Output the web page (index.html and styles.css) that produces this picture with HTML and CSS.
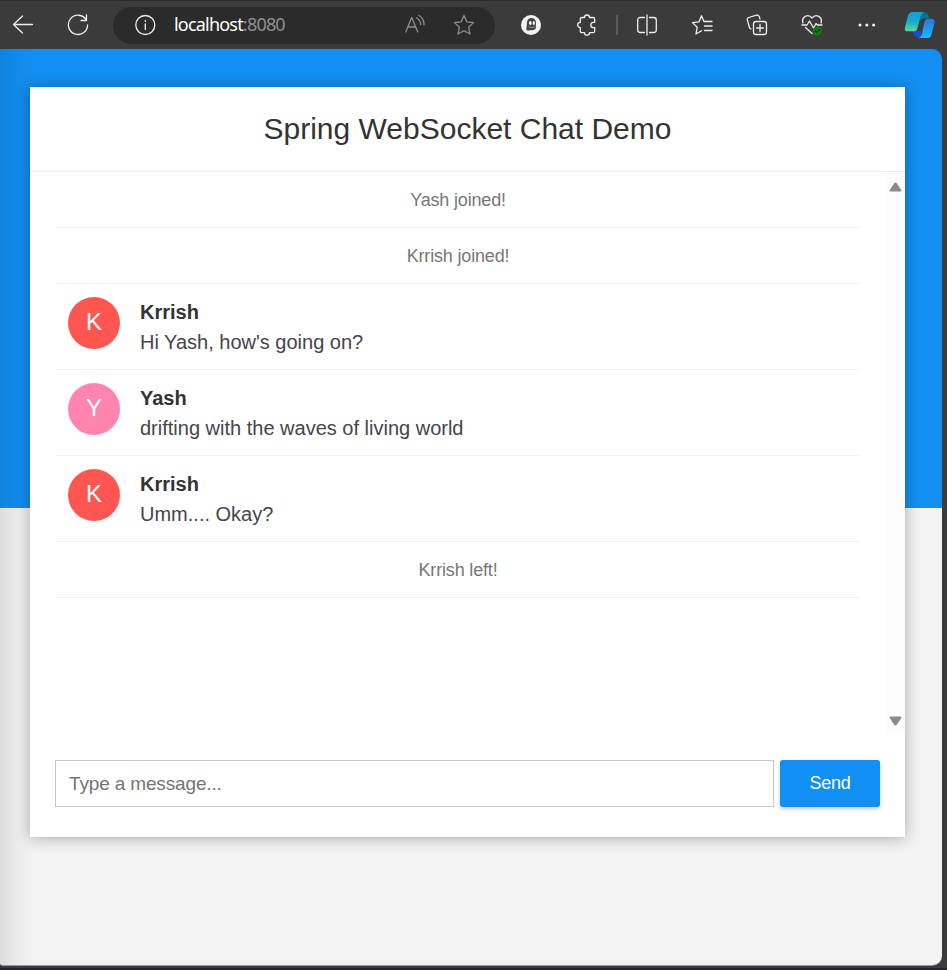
FILE: index.html
```html
<!DOCTYPE html>
<html lang="en">
<head>
<meta charset="utf-8">
<title>Spring WebSocket Chat Demo</title>
<link rel="stylesheet" href="styles.css">
</head>
<body>
<header class="toolbar">
  <div class="nav">
    <svg class="icon" viewBox="0 0 22 22"><path d="M20.500 10.500H1.500M10.500 2L1.500 10.500L10.500 19"/></svg>
    <svg class="icon" viewBox="0 0 22 22"><path d="M19.300 6A9.600 9.600 0 1 0 20.600 11M19.500 1v5.500h-5.500"/></svg>
  </div>
  <div class="address">
    <svg class="icon" viewBox="0 0 22 22"><circle cx="11.300" cy="11" r="9.500"/><path d="M11.300 10v5.500M11.300 6.500v.8"/></svg>
    <span class="url">localhost<span class="port">:8080</span></span>
    <svg class="icon dim read" viewBox="0 0 22 22"><path d="M2.800 18L8.700 3.500L14.800 18M4.900 13h7.600M13.500 3.800q4 2.500 4.300 6.700M16 1.500q5 3 5 9"/></svg>
    <svg class="icon dim" viewBox="0 0 22 22"><path d="M11 1.500L13.800 7.800L20.500 8.600L15.600 13.200L17 20L11 16.600L5 20L6.400 13.200L1.500 8.600L8.200 7.800Z"/></svg>
  </div>
  <div class="tools">
    <svg class="icon" viewBox="0 0 22 22"><circle cx="11" cy="11" r="10" fill="#f2f2f2" stroke="none"/><path d="M6.300 16L7 8.500a4.500 4.500 0 0 1 9 0L15.700 15q-2 1.500-4.700 1-2.500 1-4.700 0z" fill="#444" stroke="none"/><ellipse cx="10.300" cy="9" rx="1.300" ry="2" fill="#fff" stroke="none"/><ellipse cx="13.800" cy="9" rx="1.100" ry="2" fill="#fff" stroke="none"/><path d="M9 13q3 1.300 5 0" stroke="#888"/></svg>
    <svg class="icon puzzle" viewBox="0 0 22 22"><path d="M6 3.500H8.500a2.500 2.500 0 0 1 5 0H17q1.700 0 1.700 1.700V8.300H17.500a2.700 2.700 0 0 0 0 5.400H18.700V17q0 1.700-1.700 1.700H13.500a2.500 2.500 0 0 1-5 0H6Q4.300 18.700 4.300 17v-3.400a2.600 2.600 0 0 1 0-5.200V5.200Q4.300 3.500 6 3.500Z"/></svg>
    <i class="divider"></i>
    <svg class="icon" viewBox="0 0 22 22"><path d="M11 1v20M8.500 3.500H4.500Q1.700 3.500 1.700 6v10q0 2.500 2.800 2.500h4M13.500 3.500H17.500q2.800 0 2.800 2.500v10q0 2.500-2.800 2.500h-4"/></svg>
    <svg class="icon" viewBox="0 0 22 22"><path d="M13 7.500L10.500 1.800L8 7.800L1.500 8.600L6.200 13.200L5 20L10.500 16.800M13 7.500h8M13.500 12H21M13.500 16.500H21"/></svg>
    <svg class="icon" viewBox="0 0 22 22"><rect x="7.500" y="7.500" width="13" height="13" rx="2.500"/><path d="M14 10.500v7M10.500 14h7M5 15Q3.700 14.500 3.300 13L1.300 5.800Q1 4 2.700 3.500L10.500 1.200Q12.500 .8 13.200 2.500L14 5"/></svg>
    <svg class="icon" viewBox="0 0 22 22"><path d="M2 9C0 3 7-1 11 4C15-1 22 3 20 9M1 11h5l2.500-4 4 7 2.500-4.500L16.500 11H21M4.500 13.500L11 19.500"/><circle cx="16.500" cy="17" r="4.600" fill="#107c10" stroke="none"/><path d="M14.300 17l1.500 1.500 3-3" stroke="#064a06"/></svg>
    <svg class="icon" viewBox="0 0 22 22"><g fill="#f2f2f2" stroke="none"><circle cx="4" cy="11" r="1.500"/><circle cx="10.800" cy="11" r="1.500"/><circle cx="17.600" cy="11" r="1.500"/></g></svg>
  </div>
  <svg class="copilot" viewBox="0 0 32 28">
    <defs>
      <linearGradient id="left" x1="0" y1="0" x2="0" y2="1"><stop offset="0" stop-color="#159cd8"/><stop offset=".5" stop-color="#14aecb"/><stop offset="1" stop-color="#5ddb8c"/></linearGradient>
      <linearGradient id="right" x1="0" y1="0" x2="0" y2="1"><stop offset="0" stop-color="#2a72dc"/><stop offset="1" stop-color="#1cb9fb"/></linearGradient>
    </defs>
    <path d="M15 1h6q3 0 4 3l1 3h-5q-3 0-4 3z" fill="#116f9c"/>
    <path d="M8 20h10l-1 6h-3q-3 0-4-2z" fill="#1c49d8"/>
    <path d="M9 .5h12q-3 1-4 5l-3 11.500q-1 3.500-4 3.500H4q-4 0-3-4L4 5q1-4.500 5-4.500z" fill="url(#left)"/>
    <path d="M23 7.500h5q4 0 3.500 4l-3 12q-1 4-5 4h-9q3-1 4-4l2.500-12q.5-3 2-4z" fill="url(#right)"/>
  </svg>
</header>
<main class="page">
  <section class="card">
    <h2 class="title">Spring WebSocket Chat Demo</h2>
    <div class="scroller">
      <ul class="messages">
        <li class="event">Yash joined!</li>
        <li class="event">Krrish joined!</li>
        <li class="message"><i class="avatar red">K</i><div><b>Krrish</b><p>Hi Yash, how's going on?</p></div></li>
        <li class="message"><i class="avatar pink">Y</i><div><b>Yash</b><p>drifting with the waves of living world</p></div></li>
        <li class="message"><i class="avatar red">K</i><div><b>Krrish</b><p>Umm.... Okay?</p></div></li>
        <li class="event">Krrish left!</li>
      </ul>
      <div class="scrollbar">
        <svg viewBox="0 0 13 10"><path d="M2 9.500Q0 9.500 .7 8L5 1.500Q6.500-.5 8 1.500L12.300 8Q13 9.500 11 9.500z"/></svg>
        <svg viewBox="0 0 13 10"><path d="M2 .5Q0 .5 .7 2L5 8.500Q6.500 10.500 8 8.500L12.300 2Q13 .5 11 .5z"/></svg>
      </div>
    </div>
    <form class="composer">
      <input type="text" placeholder="Type a message...">
      <button type="button">Send</button>
    </form>
  </section>
</main>
</body>
</html>
```
FILE: styles.css
```css
* { box-sizing: border-box; margin: 0; padding: 0; }
body {
  width: 947px; height: 970px; overflow: hidden;
  background: #3b3b3b;
  border-bottom: 2px solid #23212b;
  font-family: "Liberation Sans", Arial, sans-serif;
  color: #333;
}
.toolbar {
  height: 49px; display: flex; align-items: center;
  border-top: 1px solid #2b2b2b;
  padding-left: 12px;
}
.icon { width: 22px; height: 22px; flex: none; fill: none; stroke: #eee; stroke-width: 1.3; stroke-linejoin: round; stroke-linecap: round; }
.dim { stroke: #8e8e8e; }
.nav { display: flex; gap: 33px; width: 101px; }
.address {
  width: 382px; height: 37px; border-radius: 19px; background: #2b2b2b;
  display: flex; align-items: center; padding: 0 20px 0 21px;
}
.url { font: 18px/24px "Noto Sans", sans-serif; letter-spacing: -0.8px; color: #fff; margin: -2px 0 0 18px; width: 229px; }
.port { color: #8e8e8e; }
.read { margin-right: 28px; }
.tools { display: flex; align-items: center; margin-left: 25px; gap: 33px; }
.puzzle { margin: 0 -1px 0 1px; }
.divider { width: 2px; height: 20px; background: #5c5c5c; margin: 0 -15px 0 -14px; }
.copilot { width: 31px; height: 28px; margin-left: 26px; flex: none; }
.page {
  width: 942px; height: 917px; padding: 38px 37px 0 30px;
  border-radius: 0 10px 10px 3px;
  border-bottom: 1px solid #999;
  background:
    linear-gradient(90deg, rgba(0,0,0,.09), rgba(0,0,0,.03) 18px, transparent 36px),
    linear-gradient(#128ff2 459px, #f3f3f3 459px);
}
.card { height: 750px; background: #fff; box-shadow: 0 1px 14px rgba(0,0,0,.31); display: flex; flex-direction: column; }
.title { height: 85px; border-bottom: 1px solid #ececec; text-align: center; font-weight: 400; font-size: 30px; line-height: 84px; }
.scroller { height: 563px; display: flex; }
.messages { width: 806px; margin: 0 25px; list-style: none; }
.messages li { border-bottom: 1px solid #f2f2f2; }
.event { height: 56px; line-height: 57px; text-align: center; font-size: 18px; letter-spacing: -0.17px; color: #777; }
.message { height: 86px; padding: 13px; display: flex; gap: 20px; font-size: 20px; line-height: 30px; }
.message p { color: #43464b; }
.avatar { width: 52px; height: 52px; border-radius: 50%; color: #fff; font-style: normal; font-size: 24px; line-height: 50px; text-align: center; }
.red { background: #ff5652; }
.pink { background: #ff85af; }
.scrollbar { width: 19px; background: #fcfcfc; display: flex; flex-direction: column; justify-content: space-between; align-items: center; padding: 10px 0 9px; }
.scrollbar svg { width: 13px; height: 10px; fill: #8b8b8b; }
.composer { display: flex; gap: 6px; padding: 25px 25px 0; }
.composer input { width: 719px; height: 47px; border: 1px solid #c8c8c8; padding: 0 13px; font: 19px "Liberation Sans", Arial, sans-serif; letter-spacing: -0.15px; }
.composer input::placeholder { color: #757575; }
.composer button { width: 100px; height: 47px; border: 0; border-radius: 3px; background: #128ff2; color: #fff; font: 18px "Liberation Sans", Arial, sans-serif; letter-spacing: -0.2px; box-shadow: 0 2px 4px rgba(0,0,0,.22); }
```
